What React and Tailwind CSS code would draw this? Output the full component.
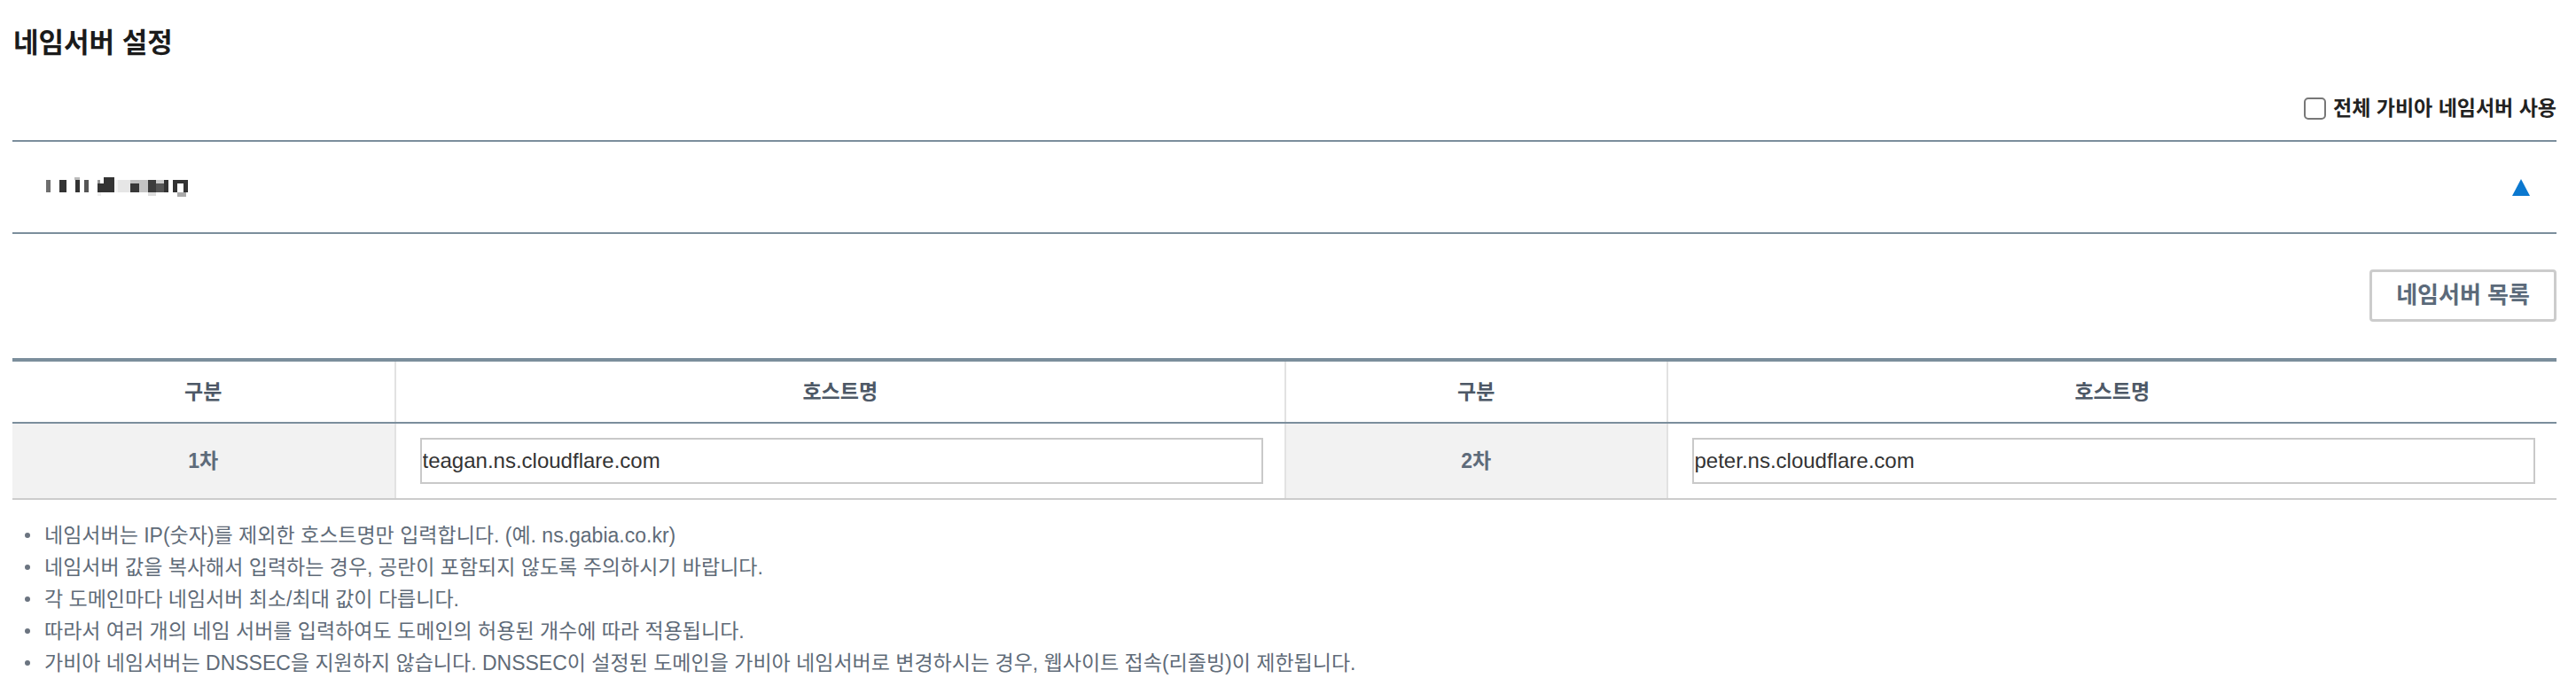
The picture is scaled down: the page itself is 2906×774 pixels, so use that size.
import React, { useState } from 'react';

const nameservers = [
  { label: '1차', host: 'teagan.ns.cloudflare.com' },
  { label: '2차', host: 'peter.ns.cloudflare.com' },
];

const notices = [
  '네임서버는 IP(숫자)를 제외한 호스트명만 입력합니다. (예. ns.gabia.co.kr)',
  '네임서버 값을 복사해서 입력하는 경우, 공란이 포함되지 않도록 주의하시기 바랍니다.',
  '각 도메인마다 네임서버 최소/최대 값이 다릅니다.',
  '따라서 여러 개의 네임 서버를 입력하여도 도메인의 허용된 개수에 따라 적용됩니다.',
  '가비아 네임서버는 DNSSEC을 지원하지 않습니다. DNSSEC이 설정된 도메인을 가비아 네임서버로 변경하시는 경우, 웹사이트 접속(리졸빙)이 제한됩니다.',
];

// mosaic-blurred domain name
const MaskedDomain = () => (
  <svg width="170" height="30" viewBox="0 0 170 30">
    <rect x="2" y="7" width="5" height="14" fill="#6e6e6e" />
    <rect x="17" y="7" width="8" height="14" fill="#333" />
    <rect x="34" y="4" width="6" height="3" fill="#bbb" />
    <rect x="35" y="7" width="5" height="14" fill="#333" />
    <rect x="45" y="7" width="5" height="14" fill="#555" />
    <rect x="60" y="7" width="3" height="4" fill="#999" />
    <rect x="60" y="11" width="19" height="10" fill="#333" />
    <rect x="67" y="4" width="12" height="7" fill="#333" />
    <rect x="60" y="21" width="4" height="4" fill="#eee" />
    <rect x="79" y="7" width="4" height="14" fill="#f3f3f3" />
    <rect x="83" y="7" width="14" height="14" fill="#e6e6e6" />
    <rect x="97" y="7" width="10" height="4" fill="#c0c0c0" />
    <rect x="97" y="11" width="10" height="10" fill="#383838" />
    <rect x="107" y="7" width="10" height="14" fill="#c4c4c4" />
    <rect x="117" y="7" width="9" height="14" fill="#3c3c3c" />
    <rect x="117" y="21" width="9" height="4" fill="#ddd" />
    <rect x="126" y="7" width="9" height="4" fill="#ccc" />
    <rect x="126" y="11" width="9" height="10" fill="#555" />
    <rect x="135" y="7" width="5" height="14" fill="#333" />
    <rect x="145" y="7" width="17" height="14" fill="#333" />
    <rect x="150" y="11" width="7" height="10" fill="#fff" />
    <rect x="150" y="21" width="10" height="5" fill="#aaa" />
  </svg>
);

export default function App() {
  const [useGabia, setUseGabia] = useState(false);
  const [open, setOpen] = useState(true);
  const [hosts, setHosts] = useState(nameservers.map((n) => n.host));

  return (
    <div className="min-h-screen bg-white pl-[14px] pr-[22px] pt-[29px] font-['Liberation_Sans','Noto_Sans_CJK_KR',sans-serif]">
      <h2 className="text-[31px] leading-[40px] font-bold text-[#1b1b1b] pl-[1px]">네임서버 설정</h2>

      <div className="mt-[40px] h-[26px] flex justify-end items-center gap-[8px]">
        <input
          type="checkbox"
          checked={useGabia}
          onChange={(e) => setUseGabia(e.target.checked)}
          className="appearance-none w-[25px] h-[25px] border-2 border-[#777] rounded-[5px] bg-white checked:bg-[#0b78cf]"
        />
        <span className="text-[23px] font-bold text-[#222]">전체 가비아 네임서버 사용</span>
      </div>

      <div className="mt-[23px] h-[106px] border-t-2 border-b-2 border-[#7b8e9c] flex items-center justify-between pl-[36px] pr-[30px]">
        <MaskedDomain />
        <button type="button" onClick={() => setOpen(!open)}>
          <svg width="20" height="19" viewBox="0 0 20 19">
            <polygon points={open ? '10,0 20,19 0,19' : '0,0 20,0 10,19'} fill="#0b78cf" />
          </svg>
        </button>
      </div>

      <div className="mt-[40px] flex justify-end">
        <button
          type="button"
          className="w-[211px] h-[59px] border-[3px] border-[#cccccc] rounded-[4px] bg-white text-[26px] font-bold text-[#5b6a7a]"
        >
          네임서버 목록
        </button>
      </div>

      <div className="mt-[41px] border-t-4 border-[#7b8e9c]">
        <div className="grid grid-cols-[15%_35%_15%_35%] h-[70px] border-b-2 border-[#7b8e9c] text-[23px] font-bold text-[#4d5866]">
          <div className="flex items-center justify-center">구분</div>
          <div className="flex items-center justify-center border-l-2 border-[#e2e2e2]">호스트명</div>
          <div className="flex items-center justify-center border-l-2 border-[#e2e2e2]">구분</div>
          <div className="flex items-center justify-center border-l-2 border-[#e2e2e2]">호스트명</div>
        </div>
        <div className="grid grid-cols-[15%_35%_15%_35%] h-[86px] border-b-2 border-[#cccccc]">
          {nameservers.map((ns, i) => (
            <React.Fragment key={ns.label}>
              <div
                className={`flex items-center justify-center bg-[#f2f2f2] text-[23px] font-bold text-[#5e6b7a] ${i > 0 ? 'border-l-2 border-[#e2e2e2]' : ''}`}
              >
                {ns.label}
              </div>
              <div className="flex items-center border-l-2 border-[#e2e2e2] pl-[27px] pr-[24px]">
                <input
                  type="text"
                  value={hosts[i]}
                  onChange={(e) => {
                    const next = [...hosts];
                    next[i] = e.target.value;
                    setHosts(next);
                  }}
                  className="w-full h-[52px] border-2 border-[#c9c9c9] px-[1px] text-[24px] text-[#333] outline-none"
                />
              </div>
            </React.Fragment>
          ))}
        </div>
      </div>

      <ul className="mt-[22px] text-[23px] leading-[36px] text-[#5f6b78]">
        {notices.map((text) => (
          <li key={text} className="flex items-center">
            <span className="w-[6px] h-[6px] rounded-full bg-[#6b7480] ml-[14px] mr-[16px] shrink-0" />
            {text}
          </li>
        ))}
      </ul>
    </div>
  );
}
